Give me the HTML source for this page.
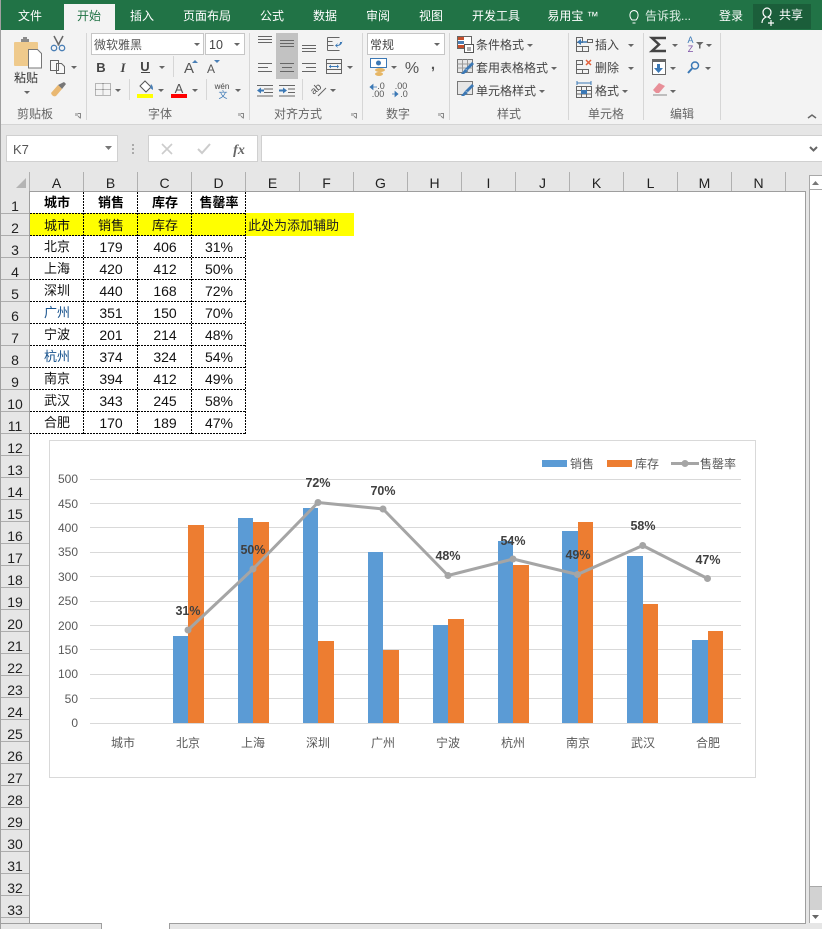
<!DOCTYPE html>
<html><head><meta charset="utf-8"><style>
html,body{margin:0;padding:0;background:#fff;width:822px;height:929px;overflow:hidden}
svg{display:block;font-family:"Liberation Sans","Noto Sans CJK SC",sans-serif}
.tab{font-size:12px;fill:#fff;text-anchor:middle}
.rb{font-size:12px;fill:#444}
.gl{font-size:12px;fill:#666;text-anchor:middle}
.ar{fill:#666}
.hd{font-size:14px;fill:#222;text-anchor:middle}
.c{font-size:13px;fill:#111;text-anchor:middle}
.n{font-size:14px;fill:#111;text-anchor:middle}
.b{font-size:13px;fill:#000;text-anchor:middle;font-weight:bold}
.ax{font-size:12px;fill:#595959;text-anchor:end}
.cat{font-size:12px;fill:#595959;text-anchor:middle}
.pc{font-size:12.5px;fill:#404040;text-anchor:middle;font-weight:bold}
.lg{font-size:12px;fill:#595959}
</style></head><body>
<svg width="822" height="929" viewBox="0 0 822 929" xmlns="http://www.w3.org/2000/svg">
<!-- base -->
<rect width="822" height="929" fill="#e6e6e6"/>
<rect x="0" y="30" width="822" height="94" fill="#f3f3f3"/>
<rect x="0" y="124" width="822" height="1" fill="#d4d4d4"/>
<!-- title tabs -->
<rect width="822" height="30" fill="#217346"/>
<rect x="0" y="0" width="1" height="929" fill="#a0a0a0"/>
<rect x="64" y="4" width="51" height="26" fill="#f3f3f3"/>
<rect x="753" y="4" width="58" height="25" fill="#1b5e3a"/>
<text class="tab" x="30" y="20">文件</text>
<text class="tab" x="89" y="20" style="fill:#217346">开始</text>
<text class="tab" x="142" y="20">插入</text>
<text class="tab" x="207" y="20">页面布局</text>
<text class="tab" x="272" y="20">公式</text>
<text class="tab" x="325" y="20">数据</text>
<text class="tab" x="378" y="20">审阅</text>
<text class="tab" x="431" y="20">视图</text>
<text class="tab" x="496" y="20">开发工具</text>
<text class="tab" x="573" y="20">易用宝 ™</text>
<path d="M632 20c-3-3-3-9 2-9.500 5 0.500 5 6.500 2 9.500zM632.500 23h3" fill="none" stroke="#fff"/>
<text x="645" y="20" style="font-size:12px;fill:#dfeee6">告诉我...</text>
<text class="tab" x="731" y="20">登录</text>
<path d="M762 23c0-3 2-5 4-6-2-1-3-3-3-5 0-2 2-4 4-4s4 2 4 4c0 2-1 4-3 5 1 .5 2 1 2.500 2M771 20v6M768 23h6" fill="none" stroke="#fff" stroke-width="1.200"/>
<text class="tab" x="791" y="19">共享</text>

<!-- ribbon separators -->
<g fill="#d6d6d6">
<rect x="86" y="33" width="1" height="87"/><rect x="249" y="33" width="1" height="87"/><rect x="362" y="33" width="1" height="87"/><rect x="449" y="33" width="1" height="87"/><rect x="568" y="33" width="1" height="87"/><rect x="643" y="33" width="1" height="87"/><rect x="720" y="33" width="1" height="87"/>
<rect x="173" y="56" width="1" height="21"/><rect x="129" y="79" width="1" height="21"/><rect x="206" y="79" width="1" height="21"/><rect x="302" y="79" width="1" height="21"/>
</g>
<!-- clipboard -->
<rect x="14" y="42" width="24" height="24" rx="1" fill="#efca8c"/>
<path d="M21 42v-3h2v-2h4v2h2v3z" fill="#8a8a8a"/>
<path d="M28.500 49.500h9l4 4v14.500h-13z" fill="#fff" stroke="#777"/>
<text class="rb" x="14" y="82" style="fill:#333">粘贴</text>
<path d="M24 91h6l-3 3z" class="ar"/>
<path d="M54 36l5 9.500M63 36l-5 9.500" stroke="#666" fill="none" stroke-width="1.500"/>
<circle cx="54" cy="48" r="2.700" fill="none" stroke="#4a7fb5" stroke-width="1.300"/><circle cx="62" cy="48" r="2.700" fill="none" stroke="#4a7fb5" stroke-width="1.300"/>
<path d="M50.500 60.500h8v10h-8zM56.500 63.500h5l3 3v7h-8z" fill="#f8f8f8" stroke="#666"/>
<path d="M71 66h6l-3 3z" class="ar"/>
<path d="M58 85l6-3 2 2-4 5z" fill="#777"/><path d="M51 93l7-8 4 4-6 7c-2 1-4 0-5-3z" fill="#e9b872"/>
<text class="gl" x="35" y="118">剪贴板</text>
<path d="M75.500 113.500h5v5M78 116l2 2" fill="none" stroke="#888"/><rect x="75" y="113" width="3" height="3" fill="#bbb"/>

<!-- font -->
<rect x="91.500" y="33.500" width="112" height="21" fill="#fff" stroke="#c6c6c6"/>
<rect x="205.500" y="33.500" width="39" height="21" fill="#fff" stroke="#c6c6c6"/>
<text x="94" y="49" style="font-size:12px;fill:#555">微软雅黑</text>
<text x="209" y="49" style="font-size:12.500px;fill:#444">10</text>
<path d="M194 43h6l-3 3zM234 43h6l-3 3z" class="ar"/>
<text x="101" y="72" style="font-size:13px;font-weight:bold;fill:#444;text-anchor:middle">B</text>
<text x="123" y="72" style="font-size:13px;font-style:italic;font-family:'Liberation Serif',serif;font-weight:bold;fill:#444;text-anchor:middle">I</text>
<text x="145" y="71" style="font-size:13px;font-weight:bold;fill:#444;text-anchor:middle">U</text>
<rect x="141" y="72" width="9" height="1" fill="#444"/>
<path d="M159 66h6l-3 3z" class="ar"/>
<text x="189" y="73" style="font-size:15px;fill:#555;text-anchor:middle">A</text>
<path d="M192 63h6l-3-3z" fill="#4a7fb5"/>
<text x="211" y="73" style="font-size:12px;fill:#555;text-anchor:middle">A</text>
<path d="M214 60h6l-3 3z" fill="#4a7fb5"/>
<path d="M95.500 83.500h15v12h-15zM103 83.500v12M95.500 89.500h15" fill="none" stroke="#777" stroke-dasharray="1 1"/>
<path d="M115 89h6l-3 3z" class="ar"/>
<path d="M140 86l5-5 6 6-5 5z" fill="#fff" stroke="#555"/><path d="M151 84c2 2 2 4 2 6l-3-2z" fill="#4a7fb5"/>
<rect x="137" y="94" width="16" height="4" fill="#ffff00"/>
<path d="M158 89h6l-3 3z" class="ar"/>
<text x="179" y="93" style="font-size:13px;fill:#555;text-anchor:middle">A</text>
<rect x="171" y="94" width="16" height="4" fill="#ff0000"/>
<path d="M192 89h6l-3 3z" class="ar"/>
<text x="222" y="89" style="font-size:8px;fill:#444;text-anchor:middle">wén</text>
<text x="223" y="98" style="font-size:9px;fill:#3b78b5;text-anchor:middle">文</text>
<path d="M235 89h6l-3 3z" class="ar"/>
<text class="gl" x="160" y="118">字体</text>
<path d="M238.500 113.500h5v5M241 116l2 2" fill="none" stroke="#888"/><rect x="238" y="113" width="3" height="3" fill="#bbb"/>

<!-- alignment -->
<rect x="276" y="33" width="22" height="46" fill="#c2c2c2"/>
<g stroke="#666" fill="none">
<path d="M258 36.500h14M258 39.500h14M258 42.500h14"/>
<path d="M280 40.500h14M280 43.500h14M280 46.500h14"/>
<path d="M302 45.500h14M302 48.500h14M302 51.500h14"/>
<path d="M258 63.500h14M258 67.500h10M258 71.500h14"/>
<path d="M280 63.500h14M282 67.500h10M280 71.500h14"/>
<path d="M302 63.500h14M306 67.500h10M302 71.500h14"/>
<path d="M327.500 37.500h12M327.500 41.500h5M327.500 45.500h6M327.500 50.500h12M327.500 37.500v13"/>
<rect x="326.500" y="59.500" width="15" height="14"/><path d="M326.500 63.500h15M326.500 69.500h15"/>
<path d="M257 85.500h16M264 89h9M264 92.500h9M257 96h16"/>
<path d="M279 85.500h16M288 89h7M288 92.500h7M279 96h16"/>
</g>
<path d="M329 66.500h9" stroke="#3b78b5"/><path d="M329 66.500l2-2v4zM339 66.500l-2-2v4z" fill="#3b78b5"/>
<path d="M342 42h-2c0 2-1 3-3 3l1-2-3 2.500 3 2.500-1-2c3 0 6-2 5-6z" fill="#3b78b5"/>
<path d="M257 90.500l4-3v2h3v2h-3v2z" fill="#3b78b5"/><path d="M287 90.500l-4-3v2h-4v2h4v2z" fill="#3b78b5"/>
<text x="316" y="92" transform="rotate(-40 316 89)" style="font-size:10px;fill:#555;text-anchor:middle">ab</text>
<path d="M318 96l8-8" stroke="#666"/>
<path d="M347 66h6l-3 3zM330 89h6l-3 3z" class="ar"/>
<text class="gl" x="298" y="118">对齐方式</text>
<path d="M351.500 113.500h5v5M354 116l2 2" fill="none" stroke="#888"/><rect x="351" y="113" width="3" height="3" fill="#bbb"/>

<!-- number -->
<rect x="367.500" y="33.500" width="77" height="21" fill="#fff" stroke="#c6c6c6"/>
<text x="370" y="49" style="font-size:12px;fill:#444">常规</text>
<path d="M434 43h6l-3 3z" class="ar"/>
<rect x="370.500" y="58.500" width="16" height="9" fill="#fff" stroke="#3b78b5"/><circle cx="378.500" cy="63" r="2.500" fill="#3b78b5"/>
<ellipse cx="380" cy="70" rx="5" ry="2" fill="#e6b665"/><ellipse cx="379" cy="74" rx="4" ry="2" fill="#e6b665"/>
<path d="M391 66h6l-3 3z" class="ar"/>
<text x="412" y="73" style="font-size:16px;fill:#555;text-anchor:middle">%</text>
<text x="433" y="69" style="font-size:15px;font-weight:bold;fill:#555;text-anchor:middle">,</text>
<text x="381" y="89" style="font-size:9px;fill:#555;text-anchor:middle">.0</text>
<text x="378" y="97" style="font-size:9px;fill:#555;text-anchor:middle">.00</text>
<path d="M370 87l3-2.500v5zM373 87h4" fill="#3b78b5" stroke="#3b78b5" stroke-width=".8"/>
<text x="401" y="89" style="font-size:9px;fill:#555;text-anchor:middle">.00</text>
<text x="404" y="97" style="font-size:9px;fill:#555;text-anchor:middle">.0</text>
<path d="M398 94l-3-2.500v5zM392 94h4" fill="#3b78b5" stroke="#3b78b5" stroke-width=".8"/>
<text class="gl" x="398" y="118">数字</text>
<path d="M438.500 113.500h5v5M441 116l2 2" fill="none" stroke="#888"/><rect x="438" y="113" width="3" height="3" fill="#bbb"/>

<!-- styles -->
<rect x="457.500" y="36.500" width="14" height="12" fill="#fff" stroke="#666"/>
<rect x="458" y="37" width="6" height="3" fill="#c6502d"/><rect x="458" y="41" width="6" height="3" fill="#4a7fb5"/><rect x="458" y="45" width="6" height="3" fill="#c6502d"/>
<rect x="464.500" y="44.500" width="9" height="8" fill="#fff" stroke="#555"/><path d="M467 48h4M467 50h4" stroke="#555"/>
<text class="rb" x="476" y="49">条件格式</text>
<path d="M527 44h6l-3 3z" class="ar"/>
<g fill="#e6e6e6" stroke="#777"><rect x="457.500" y="59.500" width="15" height="13"/><rect x="457.500" y="81.500" width="15" height="13"/></g>
<path d="M457.500 64h15M457.500 68h15M462.500 59.500v13M467.500 59.500v13" stroke="#999" fill="none"/>
<path d="M472 62l2 2-6 6-3-1z" fill="#3b78b5"/><path d="M465 69l3 2-4 3h-3z" fill="#3b78b5"/>
<path d="M472 84l2 2-6 6-3-1z" fill="#3b78b5"/><path d="M465 91l3 2-4 3h-3z" fill="#3b78b5"/>
<text class="rb" x="476" y="72">套用表格格式</text>
<path d="M551 67h6l-3 3z" class="ar"/>
<text class="rb" x="476" y="95">单元格样式</text>
<path d="M539 90h6l-3 3z" class="ar"/>
<text class="gl" x="509" y="118">样式</text>

<!-- cells -->
<g fill="none" stroke="#666">
<path d="M576.500 37.500h6v5h-6zM576.500 46.500h6v5h-6zM582.500 46.500h6v5h-6zM576.500 42.500v4M587.500 42.500h5v-3h-5z"/>
<path d="M576.500 60.500h6v4h-6zM576.500 69.500h6v4h-6zM582.500 69.500h6v4h-6zM576.500 64.500v5"/>
<rect x="576.500" y="86.500" width="15" height="11"/><path d="M576.500 90.500h15M576.500 94h15M581.500 86.500v11M586.500 86.500v11"/>
</g>
<path d="M579 42h8" stroke="#3b78b5" stroke-width="1.500"/><path d="M577 42l4-3v6z" fill="#3b78b5"/>
<path d="M586 60l5 5M591 60l-5 5" stroke="#e2603a" stroke-width="1.500"/>
<path d="M577 83h14M577 81v4M591 81v4" stroke="#3b78b5" fill="none"/>
<rect x="581" y="90" width="6" height="4" fill="#3b78b5"/>
<text class="rb" x="595" y="49">插入</text>
<text class="rb" x="595" y="72">删除</text>
<text class="rb" x="595" y="95">格式</text>
<path d="M628 44h6l-3 3zM628 67h6l-3 3zM622 90h6l-3 3z" class="ar"/>
<text class="gl" x="606" y="118">单元格</text>

<!-- editing -->
<path d="M666 38h-14l7 6.500-7 6.500h14" fill="none" stroke="#444" stroke-width="2.500"/>
<path d="M672 44h6l-3 3zM670 67h6l-3 3zM670 90h6l-3 3zM706 44h6l-3 3zM705 67h6l-3 3z" class="ar"/>
<text x="690.500" y="43" style="font-size:9px;fill:#3b78b5;text-anchor:middle">A</text>
<text x="690.500" y="52" style="font-size:9px;fill:#7b4fa5;text-anchor:middle">Z</text>
<path d="M696 42h7.500l-3 3v3.500h-1.500v-3.500z" fill="#666"/>
<rect x="652.500" y="59.500" width="13" height="15" fill="#fff" stroke="#666"/><rect x="652" y="59" width="14" height="3" fill="#666"/>
<path d="M657 64h3v4h3l-4.500 5-4.500-5h3z" fill="#3b78b5"/>
<circle cx="695" cy="65.500" r="3.500" fill="none" stroke="#3b78b5" stroke-width="1.500"/><path d="M692 68.500l-4 4.500" stroke="#3b78b5" stroke-width="2"/>
<path d="M653 90l6-7 6 3-6 7h-3z" fill="#e88f98"/><path d="M653 95h14" stroke="#888"/>
<text class="gl" x="682" y="118">编辑</text>
<path d="M808 118l4-3 4 3" fill="none" stroke="#666" stroke-width="1.500"/>

<!-- formula bar -->
<rect x="6.500" y="135.500" width="111" height="26" fill="#fff" stroke="#d0d0d0"/>
<text x="13" y="154" style="font-size:13px;fill:#555">K7</text>
<path d="M105 146h7l-3.500 4z" fill="#777"/>
<path d="M132 144h2v2h-2zM132 148h2v2h-2zM132 152h2v2h-2z" fill="#aaa"/>
<rect x="148.500" y="135.500" width="109" height="26" fill="#fff" stroke="#d0d0d0"/>
<path d="M162 144l10 10M172 144l-10 10" stroke="#ccc" stroke-width="1.600"/>
<path d="M198 149l4 4 8-9" fill="none" stroke="#ccc" stroke-width="2"/>
<text x="239" y="154" style="font-size:14px;font-style:italic;font-weight:bold;font-family:'Liberation Serif',serif;fill:#666;text-anchor:middle">fx</text>
<rect x="261.500" y="135.500" width="562" height="26" fill="#fff" stroke="#d0d0d0"/>
<path d="M810 147l3.500 3.500 3.500-3.500" fill="none" stroke="#666" stroke-width="2"/>

<!-- grid canvas -->
<rect x="30" y="192" width="775" height="731" fill="#fff"/>
<!-- column headers -->
<path d="M16 188h10v-10z" fill="#b4b4b4"/>
<g fill="#b0b0b0">
<rect x="29" y="172" width="1" height="19"/><rect x="83" y="172" width="1" height="19"/><rect x="137" y="172" width="1" height="19"/><rect x="191" y="172" width="1" height="19"/><rect x="245" y="172" width="1" height="19"/><rect x="299" y="172" width="1" height="19"/><rect x="353" y="172" width="1" height="19"/><rect x="407" y="172" width="1" height="19"/><rect x="461" y="172" width="1" height="19"/><rect x="515" y="172" width="1" height="19"/><rect x="569" y="172" width="1" height="19"/><rect x="623" y="172" width="1" height="19"/><rect x="677" y="172" width="1" height="19"/><rect x="731" y="172" width="1" height="19"/><rect x="785" y="172" width="1" height="19"/>
</g>
<rect x="30" y="191" width="776" height="1" fill="#9e9e9e"/>
<rect x="805" y="191" width="1" height="732" fill="#9e9e9e"/>
<rect x="29" y="191" width="1" height="732" fill="#9e9e9e"/>
<text class="hd" x="56.500" y="188">A</text><text class="hd" x="110.500" y="188">B</text><text class="hd" x="164.500" y="188">C</text><text class="hd" x="218.500" y="188">D</text><text class="hd" x="272.500" y="188">E</text><text class="hd" x="326.500" y="188">F</text><text class="hd" x="380.500" y="188">G</text><text class="hd" x="434.500" y="188">H</text><text class="hd" x="488.500" y="188">I</text><text class="hd" x="542.500" y="188">J</text><text class="hd" x="596.500" y="188">K</text><text class="hd" x="650.500" y="188">L</text><text class="hd" x="704.500" y="188">M</text><text class="hd" x="758.500" y="188">N</text>
<!-- row headers -->
<path stroke="#adadad" fill="none" d="M1 213.500h28M1 235.500h28M1 257.500h28M1 279.500h28M1 301.500h28M1 323.500h28M1 345.500h28M1 367.500h28M1 389.500h28M1 411.500h28M1 433.500h28M1 455.500h28M1 477.500h28M1 499.500h28M1 521.500h28M1 543.500h28M1 565.500h28M1 587.500h28M1 609.500h28M1 631.500h28M1 653.500h28M1 675.500h28M1 697.500h28M1 719.500h28M1 741.500h28M1 763.500h28M1 785.500h28M1 807.500h28M1 829.500h28M1 851.500h28M1 873.500h28M1 895.500h28M1 917.500h28"/>
<text class="hd" x="15" y="211">1</text><text class="hd" x="15" y="233">2</text><text class="hd" x="15" y="255">3</text><text class="hd" x="15" y="277">4</text><text class="hd" x="15" y="299">5</text><text class="hd" x="15" y="321">6</text><text class="hd" x="15" y="343">7</text><text class="hd" x="15" y="365">8</text><text class="hd" x="15" y="387">9</text><text class="hd" x="15" y="409">10</text><text class="hd" x="15" y="431">11</text><text class="hd" x="15" y="453">12</text><text class="hd" x="15" y="475">13</text><text class="hd" x="15" y="497">14</text><text class="hd" x="15" y="519">15</text><text class="hd" x="15" y="541">16</text><text class="hd" x="15" y="563">17</text><text class="hd" x="15" y="585">18</text><text class="hd" x="15" y="607">19</text><text class="hd" x="15" y="629">20</text><text class="hd" x="15" y="651">21</text><text class="hd" x="15" y="673">22</text><text class="hd" x="15" y="695">23</text><text class="hd" x="15" y="717">24</text><text class="hd" x="15" y="739">25</text><text class="hd" x="15" y="761">26</text><text class="hd" x="15" y="783">27</text><text class="hd" x="15" y="805">28</text><text class="hd" x="15" y="827">29</text><text class="hd" x="15" y="849">30</text><text class="hd" x="15" y="871">31</text><text class="hd" x="15" y="893">32</text><text class="hd" x="15" y="915">33</text>

<!-- table -->
<rect x="30" y="213" width="324" height="23" fill="#ffff00"/>
<path fill="none" stroke="#000" stroke-dasharray="2 1" d="M83.500 192v242M137.500 192v242M191.500 192v242M245.500 192v242M30 213.500h216M30 235.500h216M30 257.500h216M30 279.500h216M30 301.500h216M30 323.500h216M30 345.500h216M30 367.500h216M30 389.500h216M30 411.500h216M30 433.500h216"/>
<text class="b" x="57" y="207">城市</text><text class="b" x="111" y="207">销售</text><text class="b" x="165" y="207">库存</text><text class="b" x="219" y="207">售罄率</text>
<text class="c" x="57" y="230">城市</text><text class="c" x="111" y="230">销售</text><text class="c" x="165" y="230">库存</text>
<text x="248" y="230" style="font-size:13px;fill:#222">此处为添加辅助</text>
<text class="c" x="57" y="251">北京</text><text class="n" x="111" y="252">179</text><text class="n" x="165" y="252">406</text><text class="n" x="219" y="252">31%</text>
<text class="c" x="57" y="273">上海</text><text class="n" x="111" y="274">420</text><text class="n" x="165" y="274">412</text><text class="n" x="219" y="274">50%</text>
<text class="c" x="57" y="295">深圳</text><text class="n" x="111" y="296">440</text><text class="n" x="165" y="296">168</text><text class="n" x="219" y="296">72%</text>
<text class="c" x="57" y="317" style="fill:#14508c">广州</text><text class="n" x="111" y="318">351</text><text class="n" x="165" y="318">150</text><text class="n" x="219" y="318">70%</text>
<text class="c" x="57" y="339">宁波</text><text class="n" x="111" y="340">201</text><text class="n" x="165" y="340">214</text><text class="n" x="219" y="340">48%</text>
<text class="c" x="57" y="361" style="fill:#14508c">杭州</text><text class="n" x="111" y="362">374</text><text class="n" x="165" y="362">324</text><text class="n" x="219" y="362">54%</text>
<text class="c" x="57" y="383">南京</text><text class="n" x="111" y="384">394</text><text class="n" x="165" y="384">412</text><text class="n" x="219" y="384">49%</text>
<text class="c" x="57" y="405">武汉</text><text class="n" x="111" y="406">343</text><text class="n" x="165" y="406">245</text><text class="n" x="219" y="406">58%</text>
<text class="c" x="57" y="427">合肥</text><text class="n" x="111" y="428">170</text><text class="n" x="165" y="428">189</text><text class="n" x="219" y="428">47%</text>

<!-- chart -->
<rect x="49.500" y="440.500" width="706" height="337" fill="#fff" stroke="#d9d9d9"/>
<path stroke="#d9d9d9" fill="none" d="M90 479.500h651M90 503.500h651M90 527.500h651M90 552.500h651M90 576.500h651M90 601.500h651M90 625.500h651M90 649.500h651M90 674.500h651M90 698.500h651M90 723.500h651"/>
<text class="ax" x="78" y="483">500</text><text class="ax" x="78" y="508">450</text><text class="ax" x="78" y="532">400</text><text class="ax" x="78" y="556">350</text><text class="ax" x="78" y="581">300</text><text class="ax" x="78" y="605">250</text><text class="ax" x="78" y="630">200</text><text class="ax" x="78" y="654">150</text><text class="ax" x="78" y="678">100</text><text class="ax" x="78" y="703">50</text><text class="ax" x="78" y="727">0</text>
<g fill="#5b9bd5">
<rect x="173" y="636" width="15" height="87"/><rect x="238" y="518" width="15" height="205"/><rect x="303" y="508" width="15" height="215"/><rect x="368" y="552" width="15" height="171"/><rect x="433" y="625" width="15" height="98"/><rect x="498" y="541" width="15" height="182"/><rect x="562" y="531" width="16" height="192"/><rect x="627" y="556" width="16" height="167"/><rect x="692" y="640" width="16" height="83"/>
</g>
<g fill="#ed7d31">
<rect x="188" y="525" width="16" height="198"/><rect x="253" y="522" width="16" height="201"/><rect x="318" y="641" width="16" height="82"/><rect x="383" y="650" width="16" height="73"/><rect x="448" y="619" width="16" height="104"/><rect x="513" y="565" width="16" height="158"/><rect x="578" y="522" width="15" height="201"/><rect x="643" y="604" width="15" height="119"/><rect x="708" y="631" width="15" height="92"/>
</g>
<path d="M188 630L253 569L318 502.500L383 509L448 575.500L513 559L577.500 574.500L642.700 545.500L707.500 578.500" fill="none" stroke="#a5a5a5" stroke-width="3" stroke-linejoin="round"/>
<g fill="#a5a5a5"><circle cx="188" cy="630" r="3.500"/><circle cx="253" cy="569" r="3.500"/><circle cx="318" cy="502.500" r="3.500"/><circle cx="383" cy="509" r="3.500"/><circle cx="448" cy="575.500" r="3.500"/><circle cx="513" cy="559" r="3.500"/><circle cx="577.500" cy="574.500" r="3.500"/><circle cx="642.700" cy="545.500" r="3.500"/><circle cx="707.500" cy="578.500" r="3.500"/></g>
<text class="pc" x="188" y="615">31%</text><text class="pc" x="253" y="554">50%</text><text class="pc" x="318" y="487">72%</text><text class="pc" x="383" y="495">70%</text><text class="pc" x="448" y="560">48%</text><text class="pc" x="513" y="545">54%</text><text class="pc" x="578" y="559">49%</text><text class="pc" x="643" y="530">58%</text><text class="pc" x="708" y="564">47%</text>
<text class="cat" x="123" y="747">城市</text><text class="cat" x="188" y="747">北京</text><text class="cat" x="253" y="747">上海</text><text class="cat" x="318" y="747">深圳</text><text class="cat" x="383" y="747">广州</text><text class="cat" x="448" y="747">宁波</text><text class="cat" x="513" y="747">杭州</text><text class="cat" x="578" y="747">南京</text><text class="cat" x="643" y="747">武汉</text><text class="cat" x="708" y="747">合肥</text>
<rect x="542" y="460" width="25" height="7" fill="#5b9bd5"/><text class="lg" x="570" y="468">销售</text>
<rect x="607" y="460" width="25" height="7" fill="#ed7d31"/><text class="lg" x="635" y="468">库存</text>
<path d="M671 463.500h28" stroke="#a5a5a5" stroke-width="3"/><circle cx="685" cy="463.500" r="3.500" fill="#a5a5a5"/><text class="lg" x="700" y="468">售罄率</text>

<!-- scrollbar -->
<rect x="809" y="175" width="13" height="748" fill="#fff"/>
<rect x="809" y="175" width="1" height="748" fill="#a8a8a8"/>
<rect x="809" y="175" width="13" height="1" fill="#a8a8a8"/>
<rect x="809" y="189" width="13" height="1" fill="#a8a8a8"/>
<path d="M812 185h7l-3.500-4z" fill="#777"/>
<rect x="810" y="886" width="12" height="24" fill="#d2d2d2"/>
<rect x="809" y="886" width="13" height="1" fill="#a8a8a8"/>
<path d="M812 915h7l-3.500 4z" fill="#666"/>
<!-- bottom bar -->
<rect x="1" y="923" width="100" height="6" fill="#e6e6e6"/>
<rect x="1" y="923" width="100" height="1" fill="#9e9e9e"/>
<rect x="101" y="923" width="1" height="6" fill="#9e9e9e"/>
<rect x="102" y="923" width="67" height="6" fill="#fff"/>
<rect x="169" y="923" width="1" height="6" fill="#9e9e9e"/>
<rect x="170" y="923" width="636" height="1" fill="#9e9e9e"/>
</svg>
</body></html>
